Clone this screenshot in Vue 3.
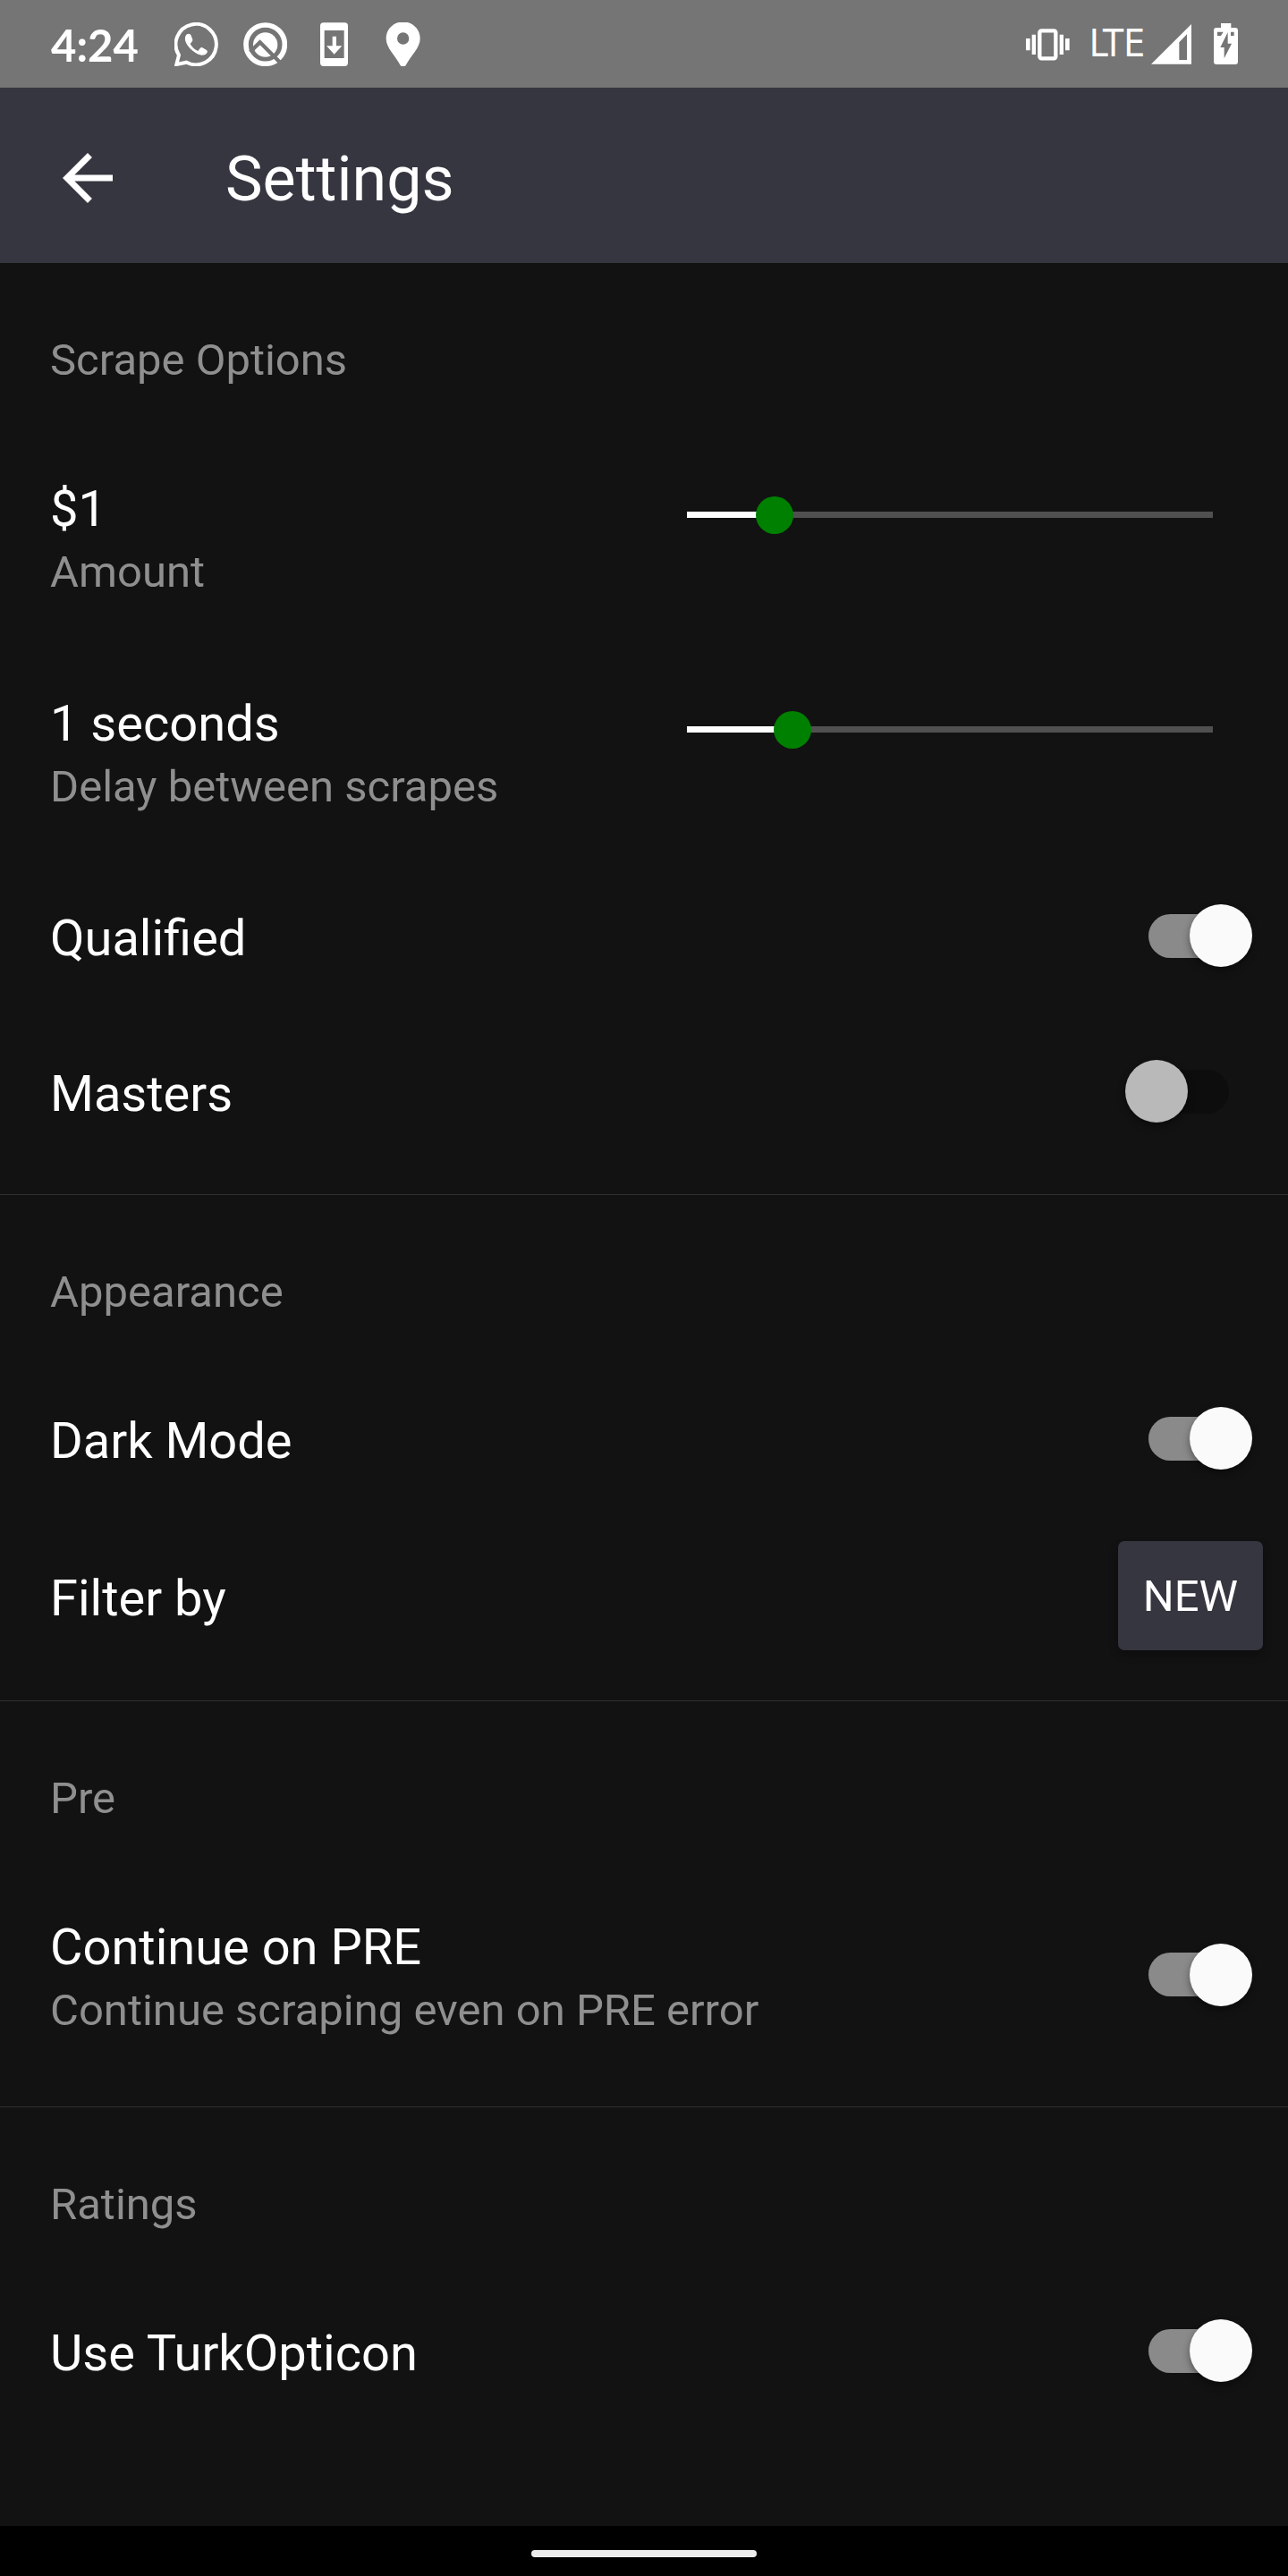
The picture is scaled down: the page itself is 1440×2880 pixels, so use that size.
<script setup>
import { reactive } from 'vue'

const sections = reactive([
  {
    title: 'Scrape Options',
    items: [
      { id: 'amount', type: 'slider', label: '$1', note: 'Amount', value: 1, max: 6 },
      { id: 'delay', type: 'slider', label: '1 seconds', note: 'Delay between scrapes', value: 1, max: 5 },
      { id: 'qualified', type: 'switch', label: 'Qualified', on: true },
      { id: 'masters', type: 'switch', label: 'Masters', on: false },
    ],
  },
  {
    title: 'Appearance',
    items: [
      { id: 'dark', type: 'switch', label: 'Dark Mode', on: true },
      { id: 'filter', type: 'button', label: 'Filter by', action: 'NEW' },
    ],
  },
  {
    title: 'Pre',
    items: [
      { id: 'pre', type: 'switch', label: 'Continue on PRE', note: 'Continue scraping even on PRE error', on: true },
    ],
  },
  {
    title: 'Ratings',
    items: [{ id: 'turk', type: 'switch', label: 'Use TurkOpticon', on: true }],
  },
])
</script>

<template>
  <div class="page">
    <div class="status">
      <div class="status-left">
        <span class="clock">4:24</span>
        <svg class="icon" viewBox="585 74 147 147">
          <path d="M592 215L600 184A68 68 0 1 1 626 208Z" fill="none" stroke="#fff" stroke-width="12" />
          <path d="M633 112q6 0 8 6l5 14q1 4-3 8l-5 6q8 16 26 24l7-9q4-4 8-2l14 8q4 3 2 8q-5 9-18 9q-12 0-30-14q-22-18-26-36q-2-14 6-20z" fill="#fff" />
        </svg>
        <svg class="icon" viewBox="815 73 147 147">
          <circle cx="889" cy="147" r="65" fill="none" stroke="#fff" stroke-width="17" />
          <circle cx="889" cy="148" r="41" fill="#fff" />
          <path d="M838 172L871 140L944 213" fill="none" stroke="#757575" stroke-width="13" />
        </svg>
        <svg class="icon" viewBox="1046 74 147 147">
          <path fill="#fff" fill-rule="evenodd" d="M1084 75h71q11 0 11 11v124q0 11-11 11h-71q-11 0-11-11V86q0-11 11-11zM1087 101v93h66v-93z" />
          <path fill="#fff" d="M1114 121h13v32h19l-26 28l-26-28h20z" />
        </svg>
        <svg class="icon" viewBox="1277 74 147 147">
          <path fill="#fff" fill-rule="evenodd" d="M1351 72c32 0 57 25 57 56c0 32-30 56-48 90q-9 12-18 0c-18-34-48-58-48-90c0-31 25-56 57-56zM1351 108a20 20 0 1 0 0 40a20 20 0 1 0 0-40z" />
        </svg>
      </div>
      <div class="status-right">
        <svg class="icon" viewBox="84 71 147 147">
          <rect x="130" y="99" width="54" height="93" rx="6" fill="none" stroke="#fff" stroke-width="13" />
          <path fill="#fff" d="M84 125h14v40h-14zM104 112h13v67h-13zM197 112h13v67h-13zM216 125h14v40h-14z" />
        </svg>
        <span class="network">LTE</span>
        <svg class="signal" viewBox="501 79 135 135">
          <path fill="#fff" fill-rule="evenodd" d="M636 79V213H501zM595 140V199H621V113z" />
        </svg>
        <svg class="battery" viewBox="711 78 81 138">
          <path fill="#fff" d="M735 78h34v15h14q9 0 9 9v105q0 9-9 9h-63q-9 0-9-9V102q0-9 9-9h15z" />
          <path fill="#757575" d="M723 107h20l-8 13h-12zM768 107h11v13h-11zM758 108v38h13l-25 50v-37h-13z" />
        </svg>
      </div>
    </div>

    <header class="bar">
      <button class="back" type="button" aria-label="Back">
        <svg viewBox="0 0 24 24"><path fill="#fff" d="M20 11H7.83l5.59-5.59L12 4l-8 8 8 8 1.41-1.41L7.83 13H20v-2z" /></svg>
      </button>
      <h1>Settings</h1>
    </header>

    <main>
      <section v-for="s in sections" :key="s.title">
        <h2>{{ s.title }}</h2>
        <div v-for="i in s.items" :key="i.id" class="row" :class="[i.type, { noted: i.note }]">
          <label class="text" :for="i.id">
            <span class="label">{{ i.label }}</span>
            <span v-if="i.note" class="note">{{ i.note }}</span>
          </label>
          <input
            v-if="i.type === 'slider'"
            :id="i.id"
            v-model.number="i.value"
            class="range"
            type="range"
            min="0"
            :max="i.max"
            :style="{ '--fill': i.value / i.max }"
          />
          <input v-else-if="i.type === 'switch'" :id="i.id" v-model="i.on" class="toggle" type="checkbox" role="switch" />
          <button v-else :id="i.id" class="action" type="button">{{ i.action }}</button>
        </div>
      </section>
    </main>

    <footer class="nav"><span class="handle"></span></footer>
  </div>
</template>

<style>
body {
  margin: 0;
  background: #121212;
}
</style>

<style scoped>
.page {
  display: flex;
  flex-direction: column;
  min-height: 100vh;
  background: #121212;
  color: #fff;
  font-family: Roboto, sans-serif;
}
.status {
  display: flex;
  justify-content: space-between;
  height: 98px;
  padding: 0 56px;
  background: #757575;
}
.status-left,
.status-right {
  display: flex;
  align-items: center;
}
.status-left {
  gap: 28px;
}
.clock {
  margin: 2px 12px 0 1px;
  font: 700 49px/58px Lato, sans-serif;
}
.icon {
  width: 49px;
  height: 49px;
}
.network {
  margin: 0 7px 0 22px;
  font: 400 42px/58px "DejaVu Sans Condensed", "Open Sans", sans-serif;
}
.signal {
  width: 45px;
  height: 45px;
}
.battery {
  width: 27px;
  height: 46px;
  margin-left: 25px;
}
.bar {
  display: flex;
  align-items: center;
  gap: 112px;
  box-sizing: border-box;
  height: 196px;
  padding: 6px 56px 0;
  background: #363640;
}
.back {
  width: 84px;
  height: 84px;
  padding: 0;
  border: 0;
  background: none;
}
.back svg {
  display: block;
}
h1 {
  margin: 0;
  padding-top: 2px;
  font-size: 70px;
  font-weight: 400;
  line-height: 84px;
}
main {
  flex: 1;
}
section + section {
  border-top: 1px solid #2f2f2f;
}
section {
  padding-bottom: 25px;
}
h2 {
  margin: 0;
  padding: 80px 56px 50px;
  color: #8f8f8f;
  font-size: 49px;
  font-weight: 400;
  line-height: 58px;
}
.row {
  display: flex;
  align-items: center;
  padding: 52px 40px 52px 56px;
}
.row.noted {
  padding-top: 54px;
  padding-bottom: 53px;
}
.row.slider {
  align-items: flex-start;
  padding-right: 63px;
}
.row.button {
  padding: 28px 28px 28px 56px;
}
.text {
  display: flex;
  flex: 1;
  flex-direction: column;
  gap: 9px;
}
.label {
  font-size: 56px;
  line-height: 66px;
}
.note {
  color: #8f8f8f;
  font-size: 49px;
  line-height: 58px;
}
.range {
  width: 630px;
  max-width: 50%;
  height: 78px;
  margin: 0;
  appearance: none;
  background: none;
}
.range::-webkit-slider-runnable-track {
  height: 7px;
  background:
    linear-gradient(#fff, #fff) 21px 0 / calc((100% - 42px) * var(--fill)) 100% no-repeat,
    linear-gradient(#505050, #505050) 21px 0 / calc(100% - 42px) 100% no-repeat;
}
.range::-webkit-slider-thumb {
  width: 42px;
  height: 42px;
  margin-top: -17px;
  appearance: none;
  border-radius: 50%;
  background: #008000;
}
.toggle {
  display: grid;
  align-items: center;
  width: 142px;
  height: 70px;
  margin: -3px 0 3px;
  appearance: none;
}
.toggle::before,
.toggle::after {
  content: "";
  grid-area: 1 / 1;
}
.toggle::before {
  justify-self: center;
  width: 90px;
  height: 49px;
  border-radius: 25px;
  background: #0d0d0d;
}
.toggle::after {
  width: 70px;
  height: 70px;
  border-radius: 50%;
  background: #b9b9b9;
  box-shadow: 0 4px 8px rgba(0, 0, 0, 0.4);
}
.toggle:checked::before {
  background: #8a8a8a;
}
.toggle:checked::after {
  justify-self: end;
  background: #fafafa;
}
.action {
  margin: -3px 0 3px;
  padding: 33px 28px 31px;
  border: 0;
  border-radius: 7px;
  background: #363640;
  box-shadow: 0 5px 10px rgba(0, 0, 0, 0.3);
  color: #fff;
  font: 400 49px/58px Roboto, sans-serif;
}
.nav {
  display: flex;
  align-items: center;
  justify-content: center;
  box-sizing: border-box;
  height: 56px;
  padding-top: 6px;
  background: #000;
}
.handle {
  width: 252px;
  height: 8px;
  border-radius: 4px;
  background: #ececec;
}
</style>
